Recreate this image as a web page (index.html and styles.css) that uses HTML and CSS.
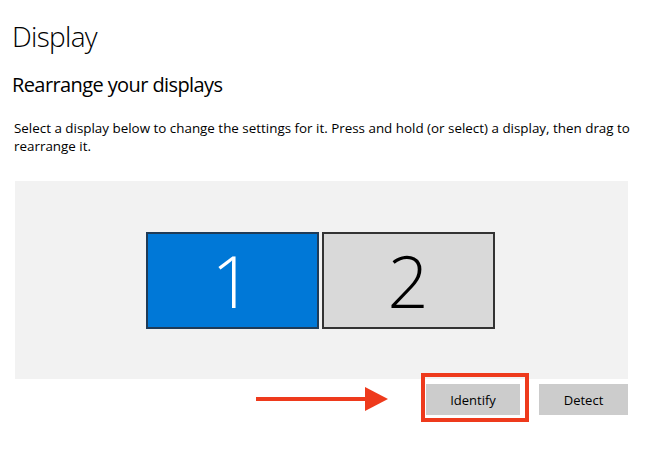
FILE: index.html
```html
<!DOCTYPE html>
<html lang="en">
<head>
<meta charset="UTF-8">
<title>Display</title>
<link rel="stylesheet" href="styles.css">
</head>
<body>
<div class="page">
    <h1 class="title">Display</h1>
    <h2 class="subtitle">Rearrange your displays</h2>
    <p class="hint">Select a display below to change the settings for it. Press and hold (or select) a display, then drag to rearrange it.</p>

    <div class="canvas">
        <div class="monitors">
            <div class="monitor selected">1</div>
            <div class="monitor">2</div>
        </div>
    </div>

    <div class="actions">
        <div class="arrow">
            <svg width="134" height="26" viewBox="0 0 134 26">
                <rect x="0" y="11" width="112" height="4" fill="#ee3a1c"/>
                <polygon points="109,1 132,13 109,25" fill="#ee3a1c"/>
            </svg>
        </div>
        <div class="highlight">
            <button class="btn">Identify</button>
        </div>
        <button class="btn detect">Detect</button>
    </div>
</div>
</body>
</html>
```

FILE: styles.css
```css
body {
    margin: 0;
    background-color: #ffffff;
    font-family: "Open Sans", "Noto Sans", Arial, sans-serif;
    color: #000000;
}
.page {
    width: 645px;
    height: 459px;
    padding: 18px 0 0 12px;
    box-sizing: border-box;
}
.title {
    margin: 0;
    font-size: 28px;
    font-weight: 300;
    line-height: 36px;
    letter-spacing: -0.7px;
}
.subtitle {
    margin: 17px 0 0 0;
    font-size: 20px;
    font-weight: 400;
    line-height: 28px;
    letter-spacing: -0.6px;
}
.hint {
    margin: 20px 0 0 2px;
    width: 625px;
    font-size: 13.4px;
    line-height: 18px;
}
.canvas {
    margin: 26px 0 0 3px;
    width: 613px;
    height: 198px;
    background-color: #f2f2f2;
    display: flex;
    justify-content: center;
    align-items: center;
}
.monitors {
    display: flex;
    gap: 3px;
    margin-right: 3px;
}
.monitor {
    width: 169px;
    height: 93px;
    border: 2px solid #333333;
    background-color: #d9d9d9;
    display: flex;
    justify-content: center;
    align-items: center;
    font-size: 72px;
    font-weight: 300;
    color: #000000;
}
.monitor.selected {
    background-color: #0078d7;
    border-color: #1f3b57;
    color: #ffffff;
}
.actions {
    position: relative;
    display: flex;
    justify-content: flex-end;
    align-items: center;
    gap: 19px;
    width: 616px;
    margin-top: 5px;
}
.arrow {
    position: absolute;
    left: 244px;
    top: 2px;
}
.highlight {
    position: relative;
}
.highlight::after {
    content: "";
    position: absolute;
    left: -5px;
    top: -11px;
    width: 100px;
    height: 41px;
    border: 4px solid #ee3a1c;
}
.btn {
    width: 94px;
    height: 31px;
    border: none;
    background-color: #cccccc;
    font-family: "Open Sans", "Noto Sans", Arial, sans-serif;
    font-size: 13px;
    color: #000000;
    padding: 0;
    margin: 0;
    display: block;
}
.btn.detect {
    width: 89px;
}
```
